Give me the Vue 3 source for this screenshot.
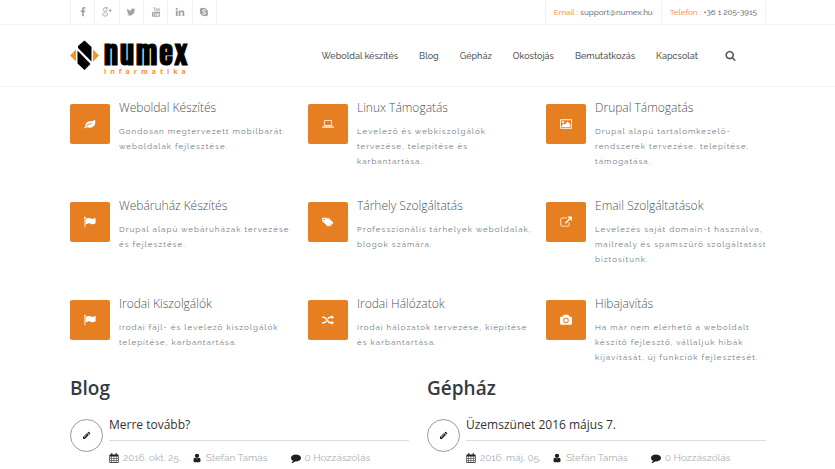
<script setup>
const socials = [
  { name: 'Facebook', icon: 'facebook' },
  { name: 'Google Plus', icon: 'gplus' },
  { name: 'Twitter', icon: 'twitter' },
  { name: 'YouTube', icon: 'youtube' },
  { name: 'LinkedIn', icon: 'linkedin' },
  { name: 'Skype', icon: 'skype' },
]

const nav = ['Weboldal készítés', 'Blog', 'Gépház', 'Okostojás', 'Bemutatkozás', 'Kapcsolat']

const services = [
  { icon: 'leaf', title: 'Weboldal Készítés', text: 'Gondosan megtervezett mobilbarát\nweboldalak fejlesztése.' },
  { icon: 'laptop', title: 'Linux Támogatás', text: 'Levelező és webkiszolgálók\ntervezése, telepítése és\nkarbantartása.' },
  { icon: 'image', title: 'Drupal Támogatás', text: 'Drupal alapú tartalomkezelő-\nrendszerek tervezése, telepítése,\ntámogatása.' },
  { icon: 'flag', title: 'Webáruház Készítés', text: 'Drupal alapú webáruházak tervezése\nés fejlesztése.' },
  { icon: 'tags', title: 'Tárhely Szolgáltatás', text: 'Professzionális tárhelyek weboldalak,\nblogok számára.' },
  { icon: 'external', title: 'Email Szolgáltatások', text: 'Levelezés saját domain-t használva,\nmailrealy és spamszűrő szolgáltatást\nbiztosítunk.' },
  { icon: 'flag', title: 'Irodai Kiszolgálók', text: 'Irodai fájl- és levelező kiszolgálók\ntelepítése, karbantartása.' },
  { icon: 'shuffle', title: 'Irodai Hálózatok', text: 'Irodai hálózatok tervezése, kiépítése\nés karbantartása.' },
  { icon: 'camera', title: 'Hibajavítás', text: 'Ha már nem elérhető a weboldalt\nkészítő fejlesztő, vállaljuk hibák\nkijavítását, új funkciók fejlesztését.' },
]

const columns = [
  { heading: 'Blog', title: 'Merre tovább?', date: '2016. okt. 25.', author: 'Stefán Tamás', comments: '0 Hozzászólás' },
  { heading: 'Gépház', title: 'Üzemszünet 2016 május 7.', date: '2016. máj. 05.', author: 'Stefán Tamás', comments: '0 Hozzászólás' },
]

const icons = {
  facebook: { box: '0 0 1792 1792', d: 'M1343 12v264h-157q-86 0-116 36t-30 108v189h293l-39 296h-254v759h-306v-759h-255v-296h255v-218q0-186 104-288.500t277-102.500q147 0 228 12z' },
  twitter: { box: '0 0 1792 1792', d: 'M1684 408q-67 98-162 167 1 14 1 42 0 130-38 259.500t-115.500 248.500-184.500 210.500-258 146-323 54.500q-271 0-496-145 35 4 78 4 225 0 401-138-105-2-188-64.500t-114-159.500q33 5 61 5 43 0 85-11-112-23-185.500-111.500t-73.500-205.500v-4q68 38 146 41-66-44-105-115t-39-154q0-88 44-163 121 149 294.500 238.500t371.500 99.500q-8-38-8-74 0-134 94.500-228.500t228.500-94.500q140 0 236 102 109-21 205-78-37 115-142 178 93-10 186-50z' },
  linkedin: { box: '0 0 1792 1792', d: 'M477 625v991h-330v-991h330zm21-306q1 73-50.500 122t-135.500 49h-2q-82 0-132-49t-50-122q0-74 51.500-122.500t134.500-48.500 133 48.500 51 122.500zm1166 729v568h-329v-530q0-105-40.500-164.500t-126.500-59.500q-63 0-105.500 34.500t-63.500 85.500q-11 30-11 81v553h-329q2-399 2-647t-1-296l-1-48h329v144h-2q20-32 41-56t56.500-52 87-43.500 114.500-15.500q171 0 275 113.500t104 332.500z' },
  gplus: { box: '0 0 14 14', line: 'M8 1H5.200C3 1 2 2.300 2 3.700s1 2.400 2.400 2.400S7 5.200 7 3.700 6 1 5 1M4.800 6.200C4.600 7.600 7.800 7.600 7.800 10c0 1.800-1.500 2.700-3.700 2.700S.8 11.700.8 10.400 2.300 8.200 5 8.200M11.500 3v4M9.500 5h4', w: 1.3 },
  youtube: { box: '0 0 14 14', line: 'M3.500.2 4.800 3v2.500M6.100.2 4.800 3M7.200 2.200h1.400v3H7.200zM10.200 2v3.200h1.600M11.800 2v3.500', w: 0.9, d: 'M2.700 6.500h8.600q1.400 0 1.400 1.500v4q0 1.700-1.400 1.700H2.700q-1.400 0-1.400-1.700V8q0-1.500 1.400-1.500zM2.500 7.600v.8h.8v4h.8v-4h.8v-.8zM5.400 9v3.400h1.900V9h-.7v2.700h-.5V9zM8 7.600v4.800h1.700V9H8.700V7.600zM10.300 9v3.400h1.500v-.7H11v-.9h.8V9z' },
  skype: { box: '0 0 14 14', line: 'M9.300 4.900C8.800 3.500 4.900 3.300 4.900 5.200c0 2 4.500 1.200 4.500 3.400 0 1.900-4.200 1.900-4.900.2', cut: true, d: 'M4 1a3.500 3.500 0 0 1 1.900.5 6 6 0 0 1 6.500 7.200A3.300 3.300 0 0 1 8 12.700 6 6 0 0 1 1.400 5.500 3.300 3.300 0 0 1 4 1z' },
  search: { box: '0 0 1792 1792', d: 'M1216 832q0-185-131.500-316.500t-316.500-131.500-316.500 131.500-131.500 316.500 131.500 316.500 316.500 131.500 316.500-131.500 131.500-316.500zm512 832q0 52-38 90t-90 38q-54 0-90-38l-343-342q-179 124-399 124-143 0-273.500-55.500t-225-150-150-225-55.500-273.500 55.500-273.500 150-225 225-150 273.500-55.500 273.500 55.500 225 150 150 225 55.500 273.500q0 220-124 399l343 343q37 37 37 90z' },
  leaf: { box: '0 0 14 14', d: 'M12.700 2c.6 1.400.8 3.400.1 5.300-1.100 3.200-4.500 4.700-8 3.900-.8-.2-1.400-.5-1.800-.3-.6.300-.9 1.400-1.600 1.400-.5 0-1-.7-.9-1.100.1-.6 1.200-1.100 1.200-1.800C1.200 6.800 2.700 5 5 4.200c2.500-.9 5.800.1 7.700-2.200zM3.700 9.200C5.200 7.800 6.700 7 9.100 7a.5.500 0 0 0 0-1C6.400 6 4.700 6.900 3 8.500c-.5.500.2 1.200.7.700z' },
  laptop: { box: '0 0 14 14', d: 'M3.300 2.500h7.400q1.100 0 1.100 1.100v4.600q0 1.100-1.100 1.100H3.300q-1.100 0-1.100-1.100V3.600q0-1.100 1.100-1.100zM3.200 3.500v4.800h7.600V3.500zM0 10h14v.6q0 .9-1.200.9H1.200Q0 11.500 0 10.600z' },
  image: { box: '0 0 14 14', d: 'M1 1.500h12q1 0 1 1v9q0 1-1 1H1q-1 0-1-1v-9q0-1 1-1zM1 2.500v9h12v-9zM2 10.500V8.800l2.300-2.300 1.200 1.200L9 4.200l3 3v3.300zM3.500 3.400a1.300 1.300 0 1 1 0 2.600 1.300 1.300 0 0 1 0-2.600z' },
  flag: { box: '0 0 14 14', d: 'M1.200 1a.9.900 0 0 1 .4 1.700v10q0 .3-.3.300H.9q-.3 0-.3-.3v-10A.9.900 0 0 1 1.200 1zM2.200 3.300c1.700-1 3.300-1.500 5.200-.6 2.200 1 3.300.7 5.400-.4q.7-.3.700.4v5.500q0 .3-.4.500c-2.300 1.300-3.600 1.100-5.500.2-1.900-.8-3.300-.2-4.700.6-.5.300-.8.100-.8-.3V3.800q0-.4.100-.5z' },
  tags: { box: '0 0 14 14', d: 'M.9 2h3.700q.8 0 1.400.6l4.800 4.800q.6.700 0 1.300l-3.200 3.200q-.6.600-1.300 0L1 6.600Q0 5.800 0 4.900V3q0-1 .9-1zM2.300 3.300a.9.900 0 1 0 0 1.800.9.900 0 0 0 0-1.800zM6 2h.6q.8 0 1.500.6l4.800 4.800q.7.700 0 1.300l-3.200 3.200q-.6.600-1.200 0L8.300 11.700l2.800-2.800q.7-.7 0-1.400z' },
  external: { box: '0 0 1856 1792', d: 'M1472 989v320q0 119-84.500 203.500t-203.500 84.500h-832q-119 0-203.500-84.500t-84.500-203.500v-832q0-119 84.500-203.500t203.500-84.500h704q14 0 23 9t9 23v64q0 14-9 23t-23 9h-704q-66 0-113 47t-47 113v832q0 66 47 113t113 47h832q66 0 113-47t47-113v-320q0-14 9-23t23-9h64q14 0 23 9t9 23zm384-864v512q0 26-19 45t-45 19-45-19l-176-176-652 652q-10 10-23 10t-23-10l-114-114q-10-10-10-23t10-23l652-652-176-176q-19-19-19-45t19-45 45-19h512q26 0 45 19t19 45z' },
  shuffle: { box: '0 0 14 14', line: 'M.2 3.700h1.700c3.800 0 3.800 6.600 7.700 6.600h2M.2 10.300h1.700c1.500 0 2.400-1 3.100-2.200M6.700 5.600c.7-1.100 1.500-1.900 2.900-1.900h2', w: 1.7, d: 'M11 1.200l3 2.500-3 2.500zM11 7.800l3 2.500-3 2.500z' },
  camera: { box: '0 0 14 14', d: 'M4.700 1h4.600q.7 0 .9.600l.5 1.300h1.400Q14 2.900 14 4.700v6q0 1.800-1.900 1.800H1.900Q0 12.500 0 10.700v-6q0-1.800 1.900-1.800h1.400l.5-1.300q.2-.6.900-.6zM7 4.300a3.200 3.200 0 1 0 0 6.400 3.200 3.200 0 0 0 0-6.400zM7 5.400a2.100 2.100 0 1 1 0 4.200 2.100 2.100 0 0 1 0-4.200z' },
  pencil: { box: '0 0 14 14', d: 'M1.500 12.500v-3l6.300-6.300 3 3-6.300 6.300zM8.500 2.500l1-1q.8-.7 1.500 0l1.500 1.500q.7.700 0 1.500l-1 1zM3 9.500l.6.500 4.500-4.500-.4-.4z' },
  calendar: { box: '0 0 14 14', d: 'M1.500 2H3V1q0-1 .9-1t.9 1v1h4.400V1q0-1 .9-1t.9 1v1h1.500q1 0 1 1v10q0 1-1 1h-11q-1 0-1-1V3q0-1 1-1zM1.500 5v2h2V5zM4.200 5v2h2.400V5zM7.300 5v2h2.400V5zM10.400 5v2h2.100V5zM1.500 7.700v2.300h2V7.700zM4.200 7.700v2.300h2.400V7.700zM7.300 7.700v2.300h2.400V7.700zM10.400 7.700v2.300h2.100V7.700zM1.500 10.700V13h2v-2.300zM4.200 10.700V13h2.400v-2.300zM7.300 10.700V13h2.400v-2.300zM10.400 10.700V13h2.100v-2.300z' },
  user: { box: '0 0 1792 1792', d: 'M1536 1399q0 109-62.500 187t-150.500 78h-854q-88 0-150.500-78t-62.500-187q0-85 8.500-160.500t31.500-152 58.500-131 94-89 134.500-34.500q131 128 313 128t313-128q76 0 134.500 34.500t94 89 58.500 131 31.500 152 8.500 160.500zm-256-887q0 159-112.500 271.500t-271.500 112.500-271.500-112.500-112.500-271.500 112.500-271.500 271.500-112.500 271.500 112.500 112.500 271.500z' },
  comment: { box: '0 0 1792 1792', d: 'M1792 896q0 174-120 321.500t-326 233-450 85.500q-70 0-145-8-198 175-460 242-49 14-114 22-17 2-30.500-9t-17.500-29v-1q-3-4-.5-12t2-10 4.500-9.500l6-9 7-8.500 8-9q7-8 31-34.500t34.500-38 31-39.500 32.500-51 27-59 26-76q-157-89-247.500-220t-90.500-281q0-130 71-248.500t191-204.500 286-136.500 348-50.500q244 0 450 85.500t326 233 120 321.500z' },
}

const Icon = (props) => {
  const i = icons[props.name]
  return h('svg', { class: 'icon', viewBox: i.box, 'aria-hidden': 'true' }, [
    i.d && h('path', { d: i.d, fill: 'currentColor', 'fill-rule': 'evenodd' }),
    i.line && h('path', { d: i.line, fill: 'none', stroke: i.cut ? '#fff' : 'currentColor', 'stroke-width': i.w || 1.4 }),
  ])
}
Icon.props = ['name']
</script>

<script>
import { h } from 'vue'
</script>

<template>
  <div class="page">
    <div class="topbar">
      <div class="container topbar-inner">
        <ul class="socials">
          <li v-for="s in socials" :key="s.name">
            <a href="#" :aria-label="s.name"><Icon :name="s.icon" /></a>
          </li>
        </ul>
        <ul class="contacts">
          <li><span class="label">Email :</span> <a href="mailto:support@numex.hu">support@numex.hu</a></li>
          <li><span class="label">Telefon :</span> +36 1 205-3915</li>
        </ul>
      </div>
    </div>

    <header class="header">
      <div class="container header-inner">
        <a class="logo" href="#">
          <svg viewBox="0 -3 120 38" role="img" aria-label="numex informatika">
            <path d="M0 15.500 6 9.500v12zM29 15.500l-6-6v12z" fill="#f7941d" />
            <path d="M8 6 14.500.500 21.500 7v14.500L8 8zM7.500 10.500 20.500 24l-6 6-7-6.500z" fill="#000" />
            <text class="logo-name" x="34" y="25">numex</text>
            <text class="logo-sub" x="34" y="34">informatika</text>
          </svg>
        </a>
        <nav class="nav">
          <a v-for="n in nav" :key="n" href="#">{{ n }}</a>
        </nav>
        <button class="search" type="button" aria-label="Keresés"><Icon name="search" /></button>
      </div>
    </header>

    <main class="container">
      <section class="services">
        <article v-for="s in services" :key="s.title" class="service">
          <div class="tile"><Icon :name="s.icon" /></div>
          <div class="service-body">
            <h3>{{ s.title }}</h3>
            <p>{{ s.text }}</p>
          </div>
        </article>
      </section>

      <div class="columns">
        <section v-for="c in columns" :key="c.heading">
          <h2>{{ c.heading }}</h2>
          <article class="post">
            <div class="badge"><Icon name="pencil" /></div>
            <div class="post-body">
              <h3><a href="#">{{ c.title }}</a></h3>
              <ul class="meta">
                <li><Icon name="calendar" />{{ c.date }}</li>
                <li class="author"><Icon name="user" />{{ c.author }}</li>
                <li><Icon name="comment" />{{ c.comments }}</li>
              </ul>
            </div>
          </article>
        </section>
      </div>
    </main>
  </div>
</template>

<style>
body {
  background: #fff;
  overflow: hidden;
}
.icon {
  display: block;
  width: 1em;
  height: 1em;
}
</style>

<style scoped>
.page {
  font-family: Raleway, Lato, sans-serif;
  color: #6f767c;
}
a {
  color: inherit;
  text-decoration: none;
}
ul {
  list-style: none;
  margin: 0;
  padding: 0;
}
h2,
h3,
p {
  margin: 0;
}
.container {
  padding: 0 69px 0 70px;
}
.topbar,
.header {
  border-bottom: 1px solid #f2f2f2;
}
.topbar-inner {
  display: flex;
  justify-content: space-between;
  height: 24px;
}
.socials {
  display: flex;
  width: 146px;
  border-left: 1px solid #f2f2f2;
}
.socials li {
  flex: 1;
  border-right: 1px solid #f2f2f2;
}
.socials a {
  display: flex;
  align-items: center;
  justify-content: center;
  height: 100%;
  font-size: 10px;
  color: #9ba3aa;
}
.contacts {
  display: flex;
  font-size: 8px;
  font-weight: 500;
  line-height: 24px;
  border-left: 1px solid #f2f2f2;
}
.contacts li {
  padding: 0 8px;
  border-right: 1px solid #f2f2f2;
}
.label {
  color: #f09a50;
}
.header-inner {
  display: flex;
  align-items: center;
  height: 61px;
}
.logo svg {
  display: block;
  width: 120px;
  height: 38px;
  overflow: visible;
}
.logo-name {
  font: 400 28px Impact, Anton, "League Gothic", "Bebas Neue", Oswald, "Fjalla One", "Roboto Condensed", "Open Sans Condensed", "Liberation Sans", sans-serif;
  letter-spacing: 2px;
  stroke: #000;
  stroke-width: 1px;
}
.logo-sub {
  font: 700 7px "Open Sans", sans-serif;
  letter-spacing: 4px;
  fill: #f7941d;
}
.nav {
  display: flex;
  gap: 21px;
  margin-left: auto;
  font-size: 9px;
  font-weight: 500;
  color: #555;
}
.search {
  margin: 0 30px 0 27px;
  padding: 0;
  border: 0;
  background: none;
  font-size: 11px;
  color: #555b60;
}
.services {
  display: grid;
  grid-template-columns: repeat(3, minmax(0, 1fr));
  gap: 27px 18px;
  padding-top: 11px;
}
.service {
  display: flex;
  gap: 9px;
}
.tile {
  flex: none;
  display: flex;
  align-items: center;
  justify-content: center;
  width: 40px;
  height: 40px;
  margin-top: 6px;
  border-radius: 2px;
  background: #e67e22;
  color: #fff;
  font-size: 12px;
}
.service h3 {
  margin-bottom: 6px;
  font: 300 12px/20px "Open Sans", sans-serif;
  color: #4c5257;
}
.service p {
  min-height: 45px;
  font-size: 8px;
  line-height: 15px;
  letter-spacing: 1px;
  white-space: pre;
}
.columns {
  display: grid;
  grid-template-columns: 1fr 1fr;
  gap: 18px;
  padding-top: 9px;
}
.columns h2 {
  font: 600 19px/28px "Open Sans", sans-serif;
  color: #333a40;
}
.post {
  display: flex;
  gap: 6px;
  padding-top: 13px;
}
.badge {
  flex: none;
  display: flex;
  align-items: center;
  justify-content: center;
  box-sizing: border-box;
  width: 33px;
  height: 33px;
  margin-top: 4px;
  border: 1px solid #999;
  border-radius: 50%;
  font-size: 9px;
  color: #222;
}
.post-body {
  flex: 1;
}
.post h3 {
  padding-bottom: 5px;
  border-bottom: 1px solid #ddd;
  font: 400 12px/20px "Open Sans", sans-serif;
  color: #333;
}
.meta {
  display: flex;
  gap: 11px;
  padding-top: 9px;
  font-size: 10px;
  line-height: 15px;
  color: #a9b0b5;
}
.meta li {
  display: flex;
  align-items: center;
  gap: 4px;
}
.meta .author {
  margin-right: 12px;
}
.meta .icon {
  color: #222;
}
</style>
